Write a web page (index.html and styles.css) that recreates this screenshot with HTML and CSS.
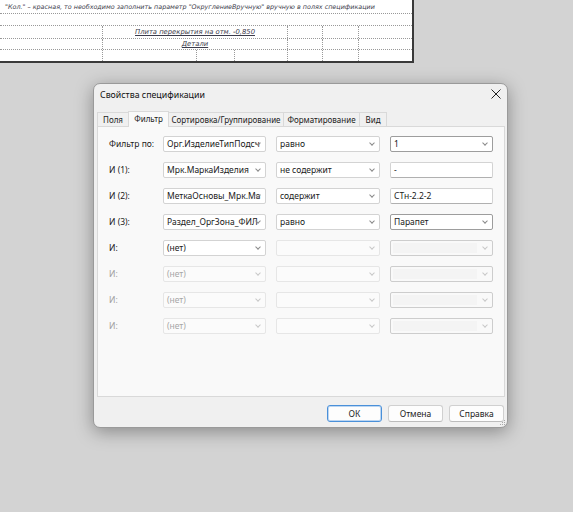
FILE: index.html
```html
<!DOCTYPE html>
<html lang="ru">
<head>
  <meta charset="UTF-8">
  <title>Свойства спецификации</title>
  <link rel="stylesheet" href="styles.css">
</head>
<body>
  <div class="sheet">
    <div class="line note">"Кол." – красная, то необходимо заполнить параметр "ОкруглениеВручную" вручную в полях спецификации</div>
    <div class="line empty"></div>
    <div class="line cells">
      <div class="cell"></div>
      <div class="cell title"><u>Плита перекрытия на отм. -0,850</u></div>
      <div class="cell"></div>
      <div class="cell"></div>
      <div class="cell"></div>
    </div>
    <div class="line cells">
      <div class="cell"></div>
      <div class="cell title"><u>Детали</u></div>
      <div class="cell"></div>
      <div class="cell"></div>
      <div class="cell"></div>
    </div>
    <div class="line cells last">
      <div class="cell"></div>
      <div class="cell"></div>
      <div class="cell"></div>
      <div class="cell"></div>
      <div class="cell"></div>
      <div class="cell"></div>
      <div class="cell"></div>
    </div>
  </div>

  <div class="dialog">
    <div class="titlebar">
      <span>Свойства спецификации</span>
      <svg class="close" width="10" height="10" viewBox="0 0 10 10"><path d="M0.5 0.5L9.5 9.5M9.5 0.5L0.5 9.5" stroke="#222" stroke-width="1"/></svg>
    </div>

    <div class="tabs">
      <div class="tab t-fields">Поля</div>
      <div class="tab t-filter active">Фильтр</div>
      <div class="tab t-sort">Сортировка/Группирование</div>
      <div class="tab t-format">Форматирование</div>
      <div class="tab t-view">Вид</div>
    </div>

    <div class="panel">
      <div class="filter">
        <div class="label">Фильтр по:</div>
        <div class="combo">Орг.ИзделиеТипПодсч</div>
        <div class="combo">равно</div>
        <div class="combo dark">1</div>

        <div class="label">И (1):</div>
        <div class="combo">Мрк.МаркаИзделия</div>
        <div class="combo">не содержит</div>
        <div class="edit">-</div>

        <div class="label">И (2):</div>
        <div class="combo">МеткаОсновы_Мрк.Ма</div>
        <div class="combo">содержит</div>
        <div class="edit">СТн-2.2-2</div>

        <div class="label">И (3):</div>
        <div class="combo">Раздел_ОргЗона_ФИЛ</div>
        <div class="combo">равно</div>
        <div class="combo dark">Парапет</div>

        <div class="label">И:</div>
        <div class="combo">(нет)</div>
        <div class="combo off"></div>
        <div class="combo off box"></div>

        <div class="label off">И:</div>
        <div class="combo off">(нет)</div>
        <div class="combo off"></div>
        <div class="combo off box"></div>

        <div class="label off">И:</div>
        <div class="combo off">(нет)</div>
        <div class="combo off"></div>
        <div class="combo off box"></div>

        <div class="label off">И:</div>
        <div class="combo off">(нет)</div>
        <div class="combo off"></div>
        <div class="combo off box"></div>
      </div>
    </div>

    <div class="buttons">
      <button class="default">ОК</button>
      <button>Отмена</button>
      <button>Справка</button>
    </div>

    <svg class="grip" width="7" height="7" viewBox="0 0 7 7">
      <rect x="5" y="1" width="1" height="1" fill="#aaa"/>
      <rect x="3" y="3" width="1" height="1" fill="#aaa"/>
      <rect x="5" y="3" width="1" height="1" fill="#aaa"/>
      <rect x="1" y="5" width="1" height="1" fill="#aaa"/>
      <rect x="3" y="5" width="1" height="1" fill="#aaa"/>
      <rect x="5" y="5" width="1" height="1" fill="#aaa"/>
    </svg>
  </div>
</body>
</html>
```

FILE: styles.css
```css
body {
  margin: 0;
  width: 573px;
  height: 512px;
  background: #d3d3d3;
  font-family: "Noto Sans", "Open Sans", sans-serif;
  font-size: 8.5px;
  color: #1a1a1a;
  position: relative;
  overflow: hidden;
}

/* drawing sheet behind the dialog */
.sheet {
  width: 412px;
  height: 60px;
  padding-top: 1px;
  background: #fff;
  border-right: 2px solid #3a3a3a;
  border-bottom: 2px solid #3a3a3a;
  border-top: 1px dotted #999;
  margin-top: -1px;
  font-family: "DejaVu Sans", sans-serif;
  font-style: italic;
  font-size: 6.4px;
  color: #3a3a4a;
}
.line {
  border-bottom: 1px dotted #999;
}
.note {
  height: 12px;
  line-height: 12px;
  padding-left: 5px;
  white-space: nowrap;
  overflow: hidden;
}
.empty {
  height: 11px;
}
.cells {
  display: grid;
  grid-template-columns: 102px 185px 35px 36px 1fr;
  height: 12px;
}
.cells + .cells {
  height: 10px;
}
.cells.last {
  grid-template-columns: 102px 94px 38px 53px 35px 36px 1fr;
  height: 11px;
  border-bottom: none;
}
.cell + .cell {
  border-left: 1px dotted #999;
}
.cell.title {
  text-align: center;
  line-height: 12px;
  font-size: 6.8px;
}
.cells + .cells .cell.title {
  line-height: 10px;
}

/* dialog window */
.dialog {
  position: absolute;
  left: 93px;
  top: 83px;
  width: 415px;
  height: 345px;
  box-sizing: border-box;
  background: #f0f0f0;
  border: 1px solid #9a9a9a;
  border-radius: 7px;
  box-shadow: 0 4px 18px rgba(0, 0, 0, 0.35);
}
.titlebar {
  height: 22px;
  display: flex;
  align-items: center;
  justify-content: space-between;
  padding: 0 6px 0 6px;
  font-size: 8.8px;
  color: #111;
}
.close {
  margin-top: -2px;
}

.tabs {
  display: flex;
  margin: 5px 0 0 3px;
  height: 15px;
  align-items: flex-end;
  position: relative;
  z-index: 1;
  font-size: 8px;
}
.tab {
  box-sizing: border-box;
  height: 14px;
  line-height: 13px;
  text-align: center;
  border: 1px solid #d9d9d9;
  border-bottom: none;
  margin-right: -1px;
  background: #f0f0f0;
  white-space: nowrap;
}
.t-fields { width: 32px; }
.t-filter { width: 41px; }
.t-sort { width: 116px; }
.t-format { width: 77px; }
.t-view { width: 28px; }
.tab.active {
  height: 16px;
  line-height: 14px;
  background: #f9f9f9;
  margin-bottom: -1px;
}

.panel {
  margin: 0 2px 0 3px;
  height: 271px;
  box-sizing: border-box;
  background: #f9f9f9;
  border: 1px solid #d9d9d9;
  padding: 9px 0 0 11px;
}
.filter {
  display: grid;
  grid-template-columns: 44px 103px 104px 103px;
  column-gap: 10px;
  row-gap: 10px;
  grid-auto-rows: 16px;
}
.label {
  line-height: 16px;
  color: #1a1a1a;
  white-space: nowrap;
}
.label.off {
  color: #a0a0a0;
}
.combo, .edit {
  box-sizing: border-box;
  height: 16px;
  line-height: 14px;
  padding-left: 3px;
  background: #fff;
  border: 1px solid #d3d3d3;
  border-radius: 2px;
  white-space: nowrap;
  overflow: hidden;
  position: relative;
}
.combo {
  padding-right: 16px;
}
.combo::after {
  content: "";
  position: absolute;
  right: 5px;
  top: 4px;
  width: 3px;
  height: 3px;
  border-right: 1px solid #8a8a8a;
  border-bottom: 1px solid #8a8a8a;
  transform: rotate(45deg);
}
.edit {
  border-bottom-color: #b0b0b0;
}
.combo.dark {
  border-color: #9d9d9d;
}
.combo.off {
  background: #fbfbfb;
  border-color: #e6e6e6;
  color: #a6a6a6;
}
.combo.off::after {
  border-color: #c8c8c8;
}
.combo.off.box {
  border-color: #cdcdcd;
  background: linear-gradient(to right, #f4f4f4 calc(100% - 15px), #fcfcfc calc(100% - 15px));
  background-clip: content-box;
  padding: 2px 15px 2px 2px;
}

.buttons {
  display: flex;
  justify-content: flex-end;
  gap: 6px;
  margin: 8px 3px 0 0;
}
button {
  width: 55px;
  height: 17px;
  box-sizing: border-box;
  font-family: "Noto Sans", sans-serif;
  font-size: 8.5px;
  color: #1a1a1a;
  background: #fdfdfd;
  border: 1px solid #d0d0d0;
  border-bottom-color: #bcbcbc;
  border-radius: 3px;
  padding: 0;
}
button.default {
  border: 1px solid #4a90d9;
  box-shadow: inset 0 0 0 1px #bcd6f2;
}
.grip {
  position: absolute;
  right: 1px;
  bottom: 1px;
}
```
